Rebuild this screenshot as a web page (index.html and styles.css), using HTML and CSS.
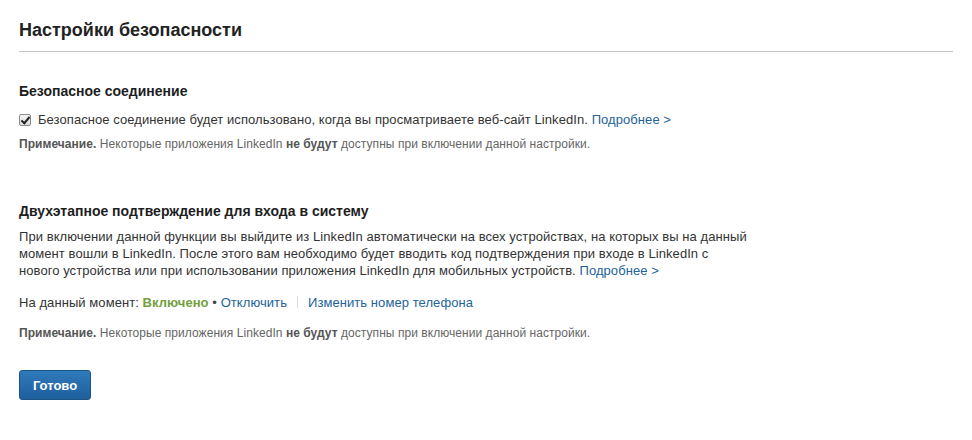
FILE: index.html
```html
<!DOCTYPE html>
<html lang="ru">
<head>
<meta charset="utf-8">
<link rel="stylesheet" href="styles.css">
</head>
<body>
<div class="page">
  <h1 class="title">Настройки безопасности</h1>
  <section class="block block-first">
    <h2 class="block-title">Безопасное соединение</h2>
    <label class="check-row">
      <input type="checkbox" class="check" checked>
      <span>Безопасное соединение будет использовано, когда вы просматриваете веб-сайт LinkedIn. <a class="link" href="#">Подробнее &gt;</a></span>
    </label>
    <p class="note"><b>Примечание.</b> Некоторые приложения LinkedIn <b>не будут</b> доступны при включении данной настройки.</p>
  </section>
  <section class="block block-second">
    <h2 class="block-title">Двухэтапное подтверждение для входа в систему</h2>
    <p class="desc">При включении данной функции вы выйдите из LinkedIn автоматически на всех устройствах, на которых вы на данный момент вошли в LinkedIn. После этого вам необходимо будет вводить код подтверждения при входе в LinkedIn с нового устройства или при использовании приложения LinkedIn для мобильных устройств. <a class="link" href="#">Подробнее&nbsp;&gt;</a></p>
    <p class="status">На данный момент: <span class="on">Включено</span> <span class="dot">•</span> <a class="link" href="#">Отключить</a><span class="sep"></span><a class="link" href="#">Изменить номер телефона</a></p>
    <p class="note"><b>Примечание.</b> Некоторые приложения LinkedIn <b>не будут</b> доступны при включении данной настройки.</p>
  </section>
  <button class="btn" type="button">Готово</button>
</div>
</body>
</html>
```

FILE: styles.css
```css
html, body {
  margin: 0;
  padding: 0;
  background: #fff;
}
body {
  font-family: "Liberation Sans", Arial, sans-serif;
  color: #333;
}
.page {
  padding: 17px 19px 0 19px;
  width: 934px;
}
.title {
  margin: 0;
  font-size: 18px;
  line-height: 26px;
  font-weight: bold;
  color: #222;
  padding-bottom: 8px;
  border-bottom: 1px solid #c4c4c4;
}
.block-first {
  margin-top: 30px;
}
.block-second {
  margin-top: 50px;
}
.block-title {
  margin: 0;
  font-size: 14px;
  line-height: 18px;
  font-weight: bold;
  color: #1e1e1e;
}
.check-row {
  display: flex;
  align-items: center;
  gap: 7px;
  margin-top: 11px;
  font-size: 13px;
  line-height: 17px;
  letter-spacing: 0.07px;
  color: #333;
}
.check {
  appearance: none;
  -webkit-appearance: none;
  position: relative;
  margin: 0;
  width: 12px;
  height: 12px;
  border: 1px solid #8c8c8c;
  border-radius: 2px;
  background: linear-gradient(#f4f4f4, #dcdcdc);
  box-sizing: border-box;
}
.check:checked::after {
  content: "";
  position: absolute;
  left: 3px;
  top: 0px;
  width: 3px;
  height: 7px;
  border: solid #222;
  border-width: 0 2px 2px 0;
  transform: rotate(40deg);
}
.link {
  text-decoration: none;
  color: #23639a;
}
.note {
  margin: 8px 0 0;
  font-size: 12px;
  line-height: 16px;
  letter-spacing: 0.05px;
  color: #666;
}
.note b {
  color: #555;
}
.desc {
  margin: 8px 0 0;
  width: 728px;
  font-size: 13px;
  line-height: 17px;
  letter-spacing: 0.07px;
  color: #333;
}
.status {
  margin: 15px 0 0;
  font-size: 13px;
  line-height: 17px;
  letter-spacing: 0.07px;
  color: #333;
}
.on {
  color: #72a03c;
  font-weight: bold;
}
.dot {
  color: #444;
}
.sep {
  display: inline-block;
  width: 1px;
  height: 12px;
  background: #ddd;
  margin: 0 10px;
  vertical-align: -1px;
}
.block-second .note {
  margin-top: 14px;
}
.btn {
  margin-top: 29px;
  width: 72px;
  height: 30px;
  border: 1px solid #1d5488;
  border-radius: 3px;
  background: linear-gradient(#2f7abb, #1f5f9d);
  color: #fff;
  font-family: "Liberation Sans", Arial, sans-serif;
  font-size: 13px;
  font-weight: bold;
  padding: 0;
}
```
